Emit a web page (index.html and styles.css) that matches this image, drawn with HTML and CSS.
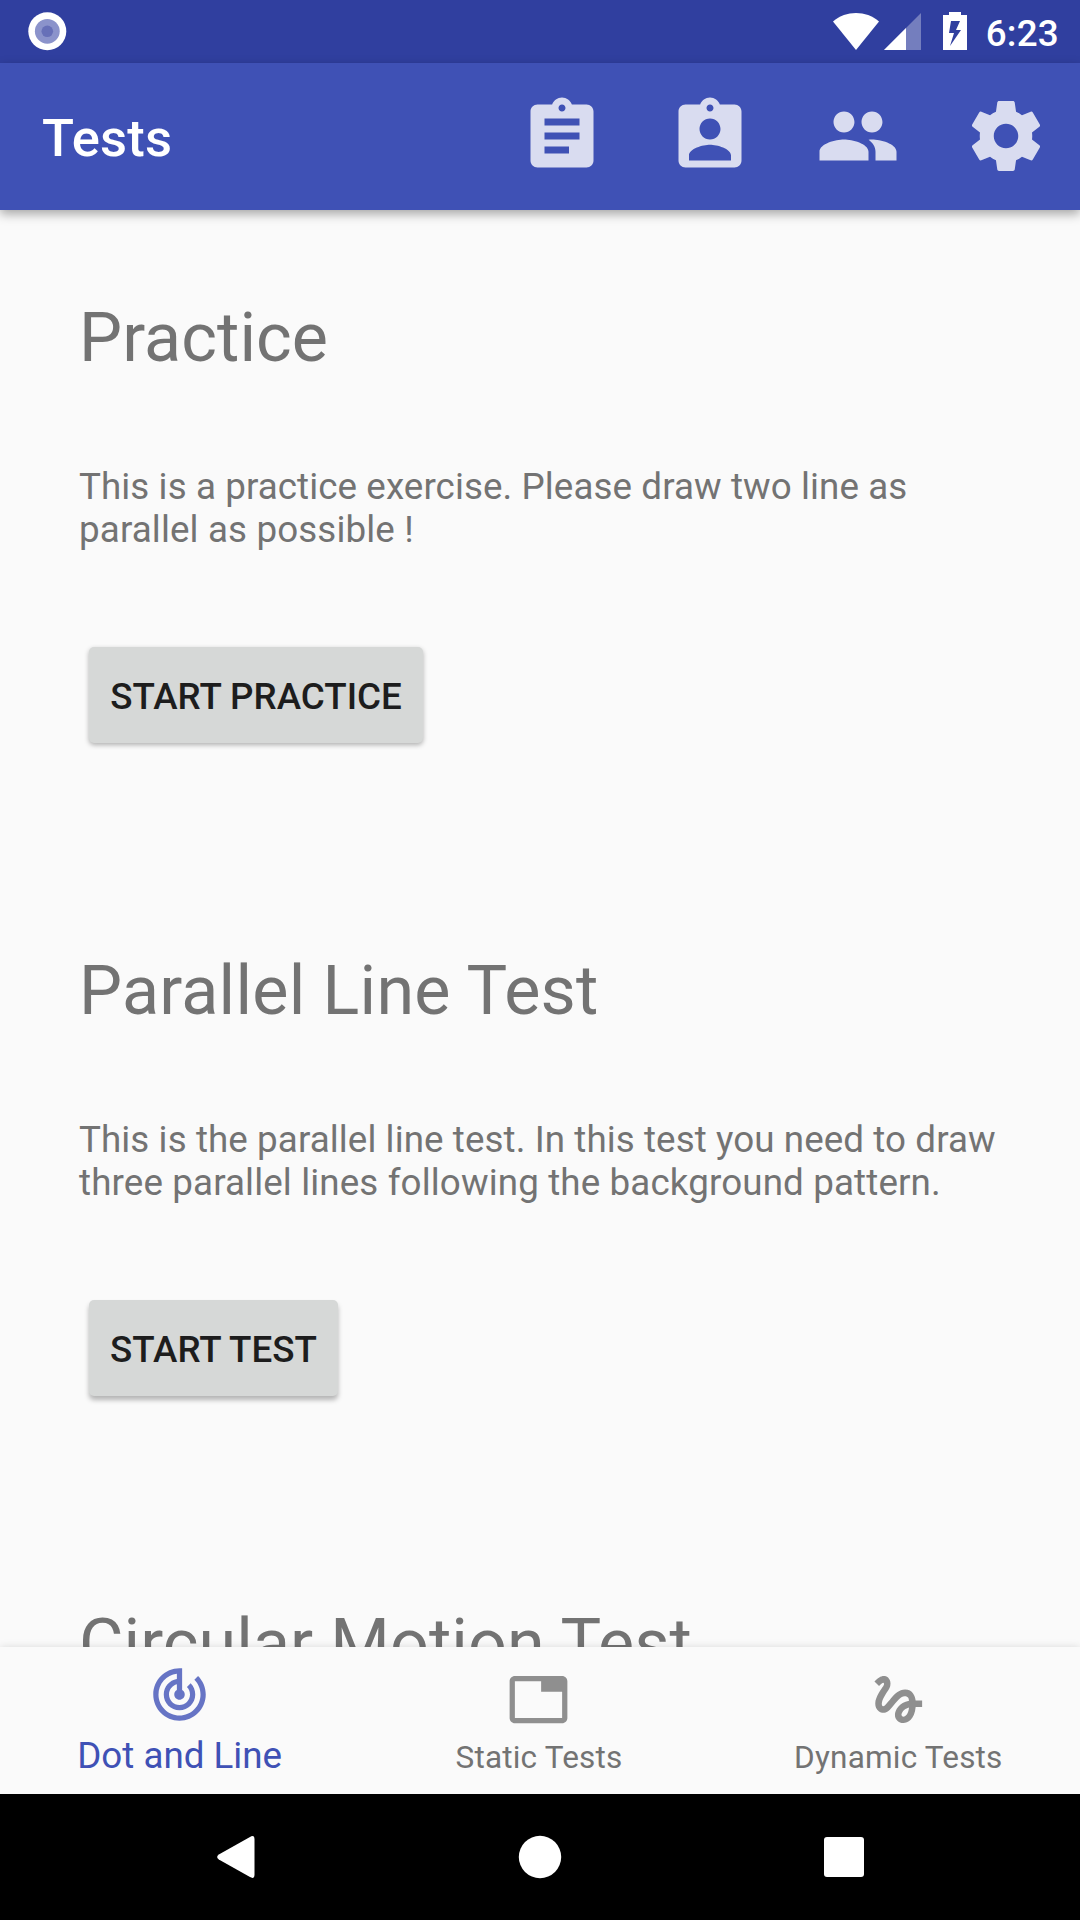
FILE: index.html
```html
<!DOCTYPE html>
<html lang="en">
<head>
<meta charset="utf-8">
<title>Tests</title>
<link rel="stylesheet" href="styles.css">
</head>
<body>
<div class="screen">
  <header class="status-bar">
    <svg class="status-dot" viewBox="0 0 40 40"><circle cx="20.300" cy="20.300" r="19" fill="#fff"/><circle cx="20.300" cy="20.300" r="12.400" fill="#8b93cb"/><circle cx="20.300" cy="20.300" r="5.800" fill="#6770b8"/></svg>
    <div class="status-right">
      <svg class="wifi" viewBox="0 0 46 37"><path d="M0 8.500C13-2.800 33-2.800 46 8.500L23 37z" fill="#fff"/></svg>
      <svg class="signal" viewBox="0 0 37 37"><path d="M37 0v37H0z" fill="#fff" fill-opacity=".33"/><path d="M22 15v22H0z" fill="#fff"/></svg>
      <svg class="battery" viewBox="0 0 24 38"><path fill="#fff" fill-rule="evenodd" d="M6 0h12v3h6v35H0V3h6zM8 9l-2 12h5L7 34 18 18h-5l4-9z"/></svg>
      <span class="time">6:23</span>
    </div>
  </header>
  <div class="app-bar">
    <h1 class="app-title">Tests</h1>
    <nav class="actions">
      <svg viewBox="0 0 24 24"><path d="M19 3h-4.180C14.400 1.840 13.300 1 12 1c-1.300 0-2.400.84-2.820 2H5c-1.100 0-2 .9-2 2v14c0 1.100.9 2 2 2h14c1.100 0 2-.9 2-2V5c0-1.100-.9-2-2-2zm-7 0c.55 0 1 .45 1 1s-.45 1-1 1-1-.45-1-1 .45-1 1-1zm2 14H7v-2h7v2zm3-4H7v-2h10v2zm0-4H7V7h10v2z"/></svg>
      <svg viewBox="0 0 24 24"><path d="M19 3h-4.180C14.400 1.840 13.300 1 12 1c-1.300 0-2.400.84-2.820 2H5c-1.100 0-2 .9-2 2v14c0 1.100.9 2 2 2h14c1.100 0 2-.9 2-2V5c0-1.100-.9-2-2-2zm-7 0c.55 0 1 .45 1 1s-.45 1-1 1-1-.45-1-1 .45-1 1-1zm0 4c1.660 0 3 1.340 3 3s-1.340 3-3 3-3-1.340-3-3 1.340-3 3-3zm6 12H6v-1.400c0-2 4-3.100 6-3.100s6 1.100 6 3.100V19z"/></svg>
      <svg viewBox="0 0 24 24"><path d="M16 11c1.660 0 2.990-1.340 2.990-3S17.660 5 16 5c-1.660 0-3 1.340-3 3s1.340 3 3 3zm-8 0c1.660 0 2.990-1.340 2.990-3S9.660 5 8 5C6.340 5 5 6.340 5 8s1.340 3 3 3zm0 2c-2.330 0-7 1.170-7 3.500V19h14v-2.500c0-2.330-4.670-3.500-7-3.500zm8 0c-.29 0-.62.02-.97.05 1.160.84 1.970 1.970 1.970 3.450V19h6v-2.500c0-2.330-4.670-3.500-7-3.500z"/></svg>
      <svg viewBox="0 0 24 24"><path d="M19.430 12.980c.04-.32.07-.64.07-.98s-.03-.66-.07-.98l2.110-1.650c.19-.15.24-.42.12-.64l-2-3.460c-.12-.22-.39-.3-.61-.22l-2.490 1c-.52-.4-1.080-.73-1.690-.98l-.38-2.650C14.460 2.180 14.250 2 14 2h-4c-.25 0-.46.18-.49.42l-.38 2.650c-.61.25-1.170.59-1.690.98l-2.490-1c-.23-.09-.49 0-.61.22l-2 3.460c-.13.22-.07.49.12.64l2.110 1.650c-.04.32-.07.65-.07.98s.03.66.07.98l-2.110 1.650c-.19.15-.24.42-.12.64l2 3.460c.12.22.39.3.61.22l2.490-1c.52.4 1.080.73 1.690.98l.38 2.650c.03.24.24.42.49.42h4c.25 0 .46-.18.49-.42l.38-2.650c.61-.25 1.170-.59 1.690-.98l2.490 1c.23.09.49 0 .61-.22l2-3.460c.12-.22.07-.49-.12-.64l-2.110-1.650zM12 15.500c-1.930 0-3.500-1.570-3.500-3.500s1.570-3.500 3.500-3.500 3.500 1.570 3.500 3.500-1.570 3.500-3.500 3.500z"/></svg>
    </nav>
  </div>
  <main class="content">
    <section class="test">
      <h2>Practice</h2>
      <p>This is a practice exercise. Please draw two line as<br>parallel as possible !</p>
      <button class="btn">START PRACTICE</button>
    </section>
    <section class="test">
      <h2 class="wide">Parallel Line Test</h2>
      <p>This is the parallel line test. In this test you need to draw<br>three parallel lines following the background pattern.</p>
      <button class="btn btn-low">START TEST</button>
    </section>
    <section class="test">
      <h2>Circular Motion Test</h2>
    </section>
  </main>
  <nav class="tabs">
    <div class="tab tab-active">
      <svg viewBox="0 0 24 24"><path d="M19.070 4.930l-1.410 1.410C19.100 7.790 20 9.790 20 12c0 4.420-3.580 8-8 8s-8-3.580-8-8c0-4.080 3.050-7.440 7-7.930v2.020C8.160 6.570 6 9.030 6 12c0 3.310 2.690 6 6 6s6-2.690 6-6c0-1.660-.67-3.160-1.760-4.240l-1.410 1.410C15.550 9.900 16 10.900 16 12c0 2.210-1.790 4-4 4s-4-1.790-4-4c0-1.860 1.280-3.410 3-3.860v2.140c-.6.35-1 .98-1 1.720 0 1.100.9 2 2 2s2-.9 2-2c0-.74-.4-1.380-1-1.720V2h-1C6.480 2 2 6.480 2 12s4.480 10 10 10 10-4.480 10-10c0-2.760-1.120-5.260-2.930-7.070z"/></svg>
      <span>Dot and Line</span>
    </div>
    <div class="tab">
      <svg viewBox="0 0 24 24"><path d="M21 3H3c-1.100 0-2 .9-2 2v14c0 1.100.9 2 2 2h18c1.100 0 2-.9 2-2V5c0-1.100-.9-2-2-2zm0 16H3V5h10v4h8v10z"/></svg>
      <span>Static Tests</span>
    </div>
    <div class="tab">
      <svg viewBox="0 0 24 24"><path d="M4.590 6.890c.7-.71 1.400-1.350 1.710-1.220.5.2 0 1.030-.3 1.520-.25.42-2.860 3.890-2.860 6.310 0 1.280.48 2.340 1.340 2.980.75.56 1.740.73 2.640.46 1.070-.31 1.950-1.400 3.060-2.770 1.210-1.490 2.830-3.440 4.080-3.440 1.630 0 1.650 1.010 1.760 1.790-3.780.64-5.380 3.670-5.380 5.370 0 1.700 1.440 3.090 3.210 3.090 1.630 0 4.290-1.330 4.690-6.100H21v-2.500h-2.470c-.15-1.650-1.090-4.200-4.030-4.200-2.250 0-4.180 1.910-4.940 2.840-.58.73-2.060 2.480-2.290 2.720-.25.3-.68.84-1.110.84-.45 0-.72-.83-.36-1.920.35-1.090 1.400-2.860 1.850-3.520.78-1.140 1.300-1.920 1.300-3.280C8.950 3.690 7.310 3 6.440 3 5.120 3 3.970 4 3.720 4.250c-.36.36-.66.66-.88.93l1.750 1.710zm9.290 11.660c-.31 0-.74-.26-.74-.72 0-.6.73-2.200 2.870-2.760-.3 2.690-1.430 3.480-2.130 3.480z"/></svg>
      <span>Dynamic Tests</span>
    </div>
  </nav>
  <footer class="system-nav">
    <svg viewBox="0 0 48 48"><path d="M38 3.900Q42.500 1.500 42.500 6.500v35Q42.500 46.500 38 44.100L6.800 26.500Q3.500 24 6.800 21.500z"/></svg>
    <svg viewBox="0 0 48 48"><circle cx="24" cy="24" r="21.200"/></svg>
    <svg viewBox="0 0 48 48"><rect x="4" y="4" width="40" height="40" rx="3"/></svg>
  </footer>
</div>
</body>
</html>
```
FILE: styles.css
```css
* { box-sizing: border-box; margin: 0; padding: 0; }
body { font-family: Roboto, sans-serif; background: #fafafa; }
svg { display: block; flex: none; }

.screen {
  width: 1080px;
  height: 1920px;
  display: flex;
  flex-direction: column;
  overflow: hidden;
  background: #fafafa;
}

.status-bar {
  height: 63px;
  flex: none;
  display: flex;
  justify-content: space-between;
  padding: 0 21px 0 27px;
  background: #303f9f;
}
.status-dot { width: 40px; height: 40px; margin-top: 11px; }
.status-right { display: flex; align-items: flex-start; }
.wifi { width: 46px; height: 37px; margin: 13px 5px 0 0; }
.signal { width: 37px; height: 37px; margin: 13px 22px 0 0; }
.battery { width: 24px; height: 38px; margin: 12px 19px 0 0; }
.time {
  font-size: 36.75px;
  font-weight: 500;
  line-height: 43px;
  letter-spacing: .25px;
  margin-top: 12px;
  color: #fff;
}

.app-bar {
  height: 147px;
  flex: none;
  display: flex;
  align-items: center;
  justify-content: space-between;
  padding: 0 32px 2px 42px;
  background: #3f51b5;
  box-shadow: 0 4px 10px rgba(0, 0, 0, .34);
  z-index: 1;
}
.app-title {
  font-size: 52.5px;
  font-weight: 500;
  line-height: 62px;
  letter-spacing: .2px;
  padding-top: 4px;
  color: #fff;
}
.actions { display: flex; gap: 64px; }
.actions svg { width: 84px; height: 84px; fill: #d9dcf0; }

.content { flex: 1; min-height: 0; overflow: hidden; }
.test { height: 653px; padding: 88px 79px 0; }
.test h2 {
  font-size: 68.25px;
  font-weight: 400;
  line-height: 80px;
  letter-spacing: .07px;
  margin-bottom: 87px;
  color: #737373;
}
.test .wide { letter-spacing: .22px; }
.test p {
  font-size: 36.75px;
  line-height: 43px;
  letter-spacing: .13px;
  color: #737373;
  white-space: nowrap;
}
.test p::first-line { letter-spacing: .085px; }
.btn {
  display: block;
  width: 334px;
  height: 96px;
  margin: 96px 0 0 10px;
  padding-top: 2px;
  border: 0;
  border-radius: 5px;
  background: #d6d8d7;
  color: #1d1d1d;
  font: 500 36.75px/43px Roboto, sans-serif;
  white-space: nowrap;
  box-shadow: 0 2px 5px rgba(0, 0, 0, .3);
}
.btn-low { width: 249px; box-shadow: 0 4px 5px rgba(0, 0, 0, .28); }

.tabs {
  height: 147px;
  flex: none;
  display: flex;
  padding-right: 2px;
  background: #fafafa;
  box-shadow: 0 0 8px rgba(0, 0, 0, .13);
  z-index: 1;
}
.tab {
  flex: 1;
  display: flex;
  flex-direction: column;
  align-items: center;
  padding-top: 21px;
  color: #737373;
  font-size: 31.5px;
  line-height: 37px;
  letter-spacing: .2px;
}
.tab svg { width: 63px; height: 63px; fill: #8f8f8f; margin-bottom: 8px; }
.tab-active {
  padding-top: 16px;
  color: #3f51b5;
  font-size: 36.75px;
  line-height: 43px;
  letter-spacing: 0;
}
.tab-active svg { fill: #6674c5; }

.system-nav {
  height: 126px;
  flex: none;
  display: flex;
  align-items: center;
  justify-content: center;
  gap: 256px;
  background: #000;
  z-index: 2;
}
.system-nav svg { width: 48px; height: 48px; fill: #fff; }
```
